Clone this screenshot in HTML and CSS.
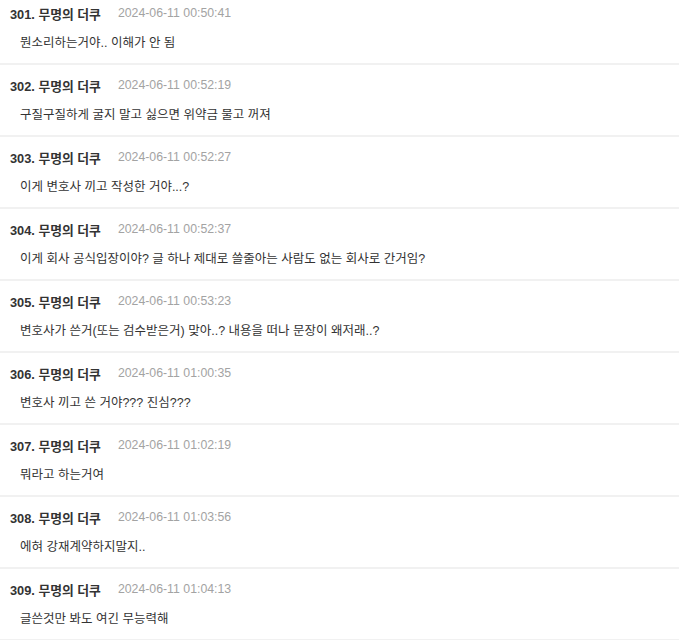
FILE: index.html
```html
<!DOCTYPE html>
<html lang="ko">
<head>
<meta charset="utf-8">
<link rel="stylesheet" href="styles.css">
</head>
<body>
<ul class="comments">
  <li class="comment">
    <div class="head"><span class="name">301. 무명의 더쿠</span><span class="date">2024-06-11 00:50:41</span></div>
    <p class="text">뭔소리하는거야.. 이해가 안 됨</p>
  </li>
  <li class="comment">
    <div class="head"><span class="name">302. 무명의 더쿠</span><span class="date">2024-06-11 00:52:19</span></div>
    <p class="text">구질구질하게 굴지 말고 싫으면 위약금 물고 꺼져</p>
  </li>
  <li class="comment">
    <div class="head"><span class="name">303. 무명의 더쿠</span><span class="date">2024-06-11 00:52:27</span></div>
    <p class="text">이게 변호사 끼고 작성한 거야...?</p>
  </li>
  <li class="comment">
    <div class="head"><span class="name">304. 무명의 더쿠</span><span class="date">2024-06-11 00:52:37</span></div>
    <p class="text">이게 회사 공식입장이야? 글 하나 제대로 쓸줄아는 사람도 없는 회사로 간거임?</p>
  </li>
  <li class="comment">
    <div class="head"><span class="name">305. 무명의 더쿠</span><span class="date">2024-06-11 00:53:23</span></div>
    <p class="text">변호사가 쓴거(또는 검수받은거) 맞아..? 내용을 떠나 문장이 왜저래..?</p>
  </li>
  <li class="comment">
    <div class="head"><span class="name">306. 무명의 더쿠</span><span class="date">2024-06-11 01:00:35</span></div>
    <p class="text">변호사 끼고 쓴 거야??? 진심???</p>
  </li>
  <li class="comment">
    <div class="head"><span class="name">307. 무명의 더쿠</span><span class="date">2024-06-11 01:02:19</span></div>
    <p class="text">뭐라고 하는거여</p>
  </li>
  <li class="comment">
    <div class="head"><span class="name">308. 무명의 더쿠</span><span class="date">2024-06-11 01:03:56</span></div>
    <p class="text">에혀 강재계약하지말지..</p>
  </li>
  <li class="comment">
    <div class="head"><span class="name">309. 무명의 더쿠</span><span class="date">2024-06-11 01:04:13</span></div>
    <p class="text">글쓴것만 봐도 여긴 무능력해</p>
  </li>
</ul>
</body>
</html>
```
FILE: styles.css
```css
html, body {
  margin: 0;
  padding: 0;
  background: #ffffff;
}
body {
  font-family: "Liberation Sans", "Noto Sans CJK KR", sans-serif;
  color: #333333;
  overflow: hidden;
}
.comments {
  list-style: none;
  margin: -7px 0 0 0;
  padding: 0;
}
.comment {
  height: 70px;
  padding: 0 10px;
  border-bottom: 2px solid #f1f1f1;
}
.head {
  display: flex;
  align-items: center;
  gap: 17px;
  height: 20px;
  padding-top: 10px;
}
.name {
  font-size: 12.8px;
  font-weight: 700;
  color: #333333;
}
.date {
  font-size: 12.3px;
  color: #a3a3a3;
}
.text {
  margin: 10px 0 0 10px;
  font-size: 12.5px;
  line-height: 20px;
  color: #333333;
}
```
